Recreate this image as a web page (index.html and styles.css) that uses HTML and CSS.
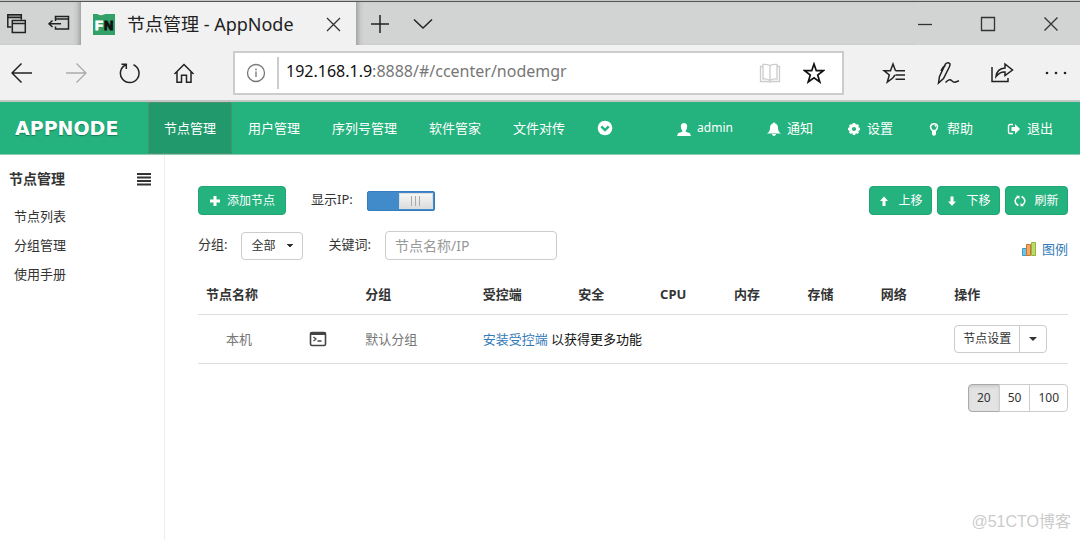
FILE: index.html
```html
<!DOCTYPE html>
<html lang="zh-CN">
<head>
<meta charset="utf-8">
<title>节点管理 - AppNode</title>
<link rel="stylesheet" href="styles.css">
</head>
<body>
<div class="window">
  <div class="tabstrip">
    <div class="tab-tools">
      <button class="icon-btn" aria-label="标签页"><svg width="22" height="22" viewBox="0 0 22 22"><path fill="#999" d="M2 2h13v2H2z"/><g class="ln dark"><path d="M5.500 14H1.800V1.800h13.500v5M2 4.500h13"/><path d="M6.300 7.500h13v12h-13zM6.300 10.500h13"/></g></svg></button>
      <button class="icon-btn" aria-label="搁置标签页"><svg width="22" height="22" viewBox="0 0 22 22"><g class="ln dark"><path d="M7.500 8v-4.500h13v12.500h-13v-2.500M7.500 6h13M13 10.800H1M4.500 7.500L1 10.800 4.500 14"/></g></svg></button>
    </div>
    <div class="tab">
      <svg class="favicon" width="24" height="22" viewBox="0 0 24 22" aria-hidden="true"><path fill="#32a067" d="M1 1h22v21H1z"/><path fill="#f1f1f1" d="M4 0q4 3.500 8 1.500Q15 0 16 0z"/><text class="fav-text" x="3" y="17" fill="#fff" stroke="#fff">F</text><text class="fav-text" x="12" y="17" fill="#111" stroke="#111">N</text></svg>
      <span class="tab-title">节点管理 - AppNode</span>
      <button class="icon-btn" aria-label="关闭标签页"><svg width="16" height="16" viewBox="0 0 16 16"><path class="ln" d="M2 2l13 13M15 2L2 15"/></svg></button>
    </div>
    <div class="tab-actions">
      <button class="icon-btn" aria-label="新建标签页"><svg width="20" height="20" viewBox="0 0 20 20"><path class="ln dark" d="M10 1v18M1 10h18"/></svg></button>
      <button class="icon-btn" aria-label="标签页预览"><svg width="20" height="20" viewBox="0 0 20 20"><path class="ln dark" d="M1 5.500l9 8.500 9-8.500"/></svg></button>
    </div>
    <div class="win-controls">
      <button class="icon-btn" aria-label="最小化"><svg width="16" height="16" viewBox="0 0 16 16"><path class="ln" d="M1 8.500h14"/></svg></button>
      <button class="icon-btn" aria-label="最大化"><svg width="16" height="16" viewBox="0 0 16 16"><path class="ln" d="M1.500 1.500h13v13h-13z"/></svg></button>
      <button class="icon-btn" aria-label="关闭"><svg width="16" height="16" viewBox="0 0 16 16"><path class="ln" d="M1.500 1.500l13 13M14.500 1.500l-13 13"/></svg></button>
    </div>
  </div>

  <div class="toolbar">
    <div class="nav-btns">
      <button class="icon-btn" aria-label="后退"><svg width="22" height="22" viewBox="0 0 22 22"><path class="ln dark" d="M21 11H1M10.500 1.500L1 11l9.500 9.500"/></svg></button>
      <button class="icon-btn" aria-label="前进"><svg width="22" height="22" viewBox="0 0 22 22"><path class="ln faint" d="M1 11h20M11.500 1.500L21 11l-9.500 9.500"/></svg></button>
      <button class="icon-btn" aria-label="刷新页面"><svg width="22" height="22" viewBox="0 0 22 22"><path class="ln dark" d="M14.500 2.800A9.300 9.300 0 1 1 6.500 3M2.500 2.200H7.300V7"/></svg></button>
      <button class="icon-btn" aria-label="主页"><svg width="22" height="22" viewBox="0 0 22 22"><path class="ln dark" d="M1.500 12L11 2.500l9.500 9.500M4 10v10.300h4.500v-7h5v7H18V10"/></svg></button>
    </div>
    <div class="address">
      <button class="icon-btn info" aria-label="网站信息"><svg width="20" height="20" viewBox="0 0 20 20"><circle class="ln gray" cx="10" cy="10" r="8.500"/><path class="ln gray" d="M10 8.500V14M10 5.500v2"/></svg></button>
      <label class="host" for="url">192.168.1.9</label>
      <input id="url" class="url" type="text" value=":8888/#/ccenter/nodemgr">
      <button class="icon-btn" aria-label="阅读视图"><svg width="22" height="22" viewBox="0 0 22 22"><path class="ln pale" d="M11 3.500Q8 2 4 2.500v14.500q4-.5 7 1.500 3-2 7-1.500V2.500Q14 2 11 3.500v15M4 4.500H1.500v15H9.500l1.500.8 1.500-.8h8v-15H18"/></svg></button>
      <button class="icon-btn" aria-label="收藏"><svg width="22" height="22" viewBox="0 0 22 22"><path class="ln bold" d="M11 2l2.300 6.700h7L14.700 13l2.100 7L11 15.900 5.200 20l2.100-7L1.700 8.700h7z"/></svg></button>
    </div>
    <div class="tool-btns">
      <button class="icon-btn" aria-label="中心"><svg width="24" height="22" viewBox="0 0 24 22"><path class="ln dark" d="M13.500 8.700H23M13.500 13H23M13.500 17.300H23M13.500 8.700L11 2 8.500 8.700H2L7.300 13l-2 7 5.500-4 2.200-3"/></svg></button>
      <button class="icon-btn" aria-label="添加笔记"><svg width="24" height="24" viewBox="0 0 24 24"><path class="ln dark" d="M2.500 22l1-6.500L9.500 3Q11.500.8 13.800 2.500q.5 1.500-.5 3.500L7.500 17.500zM9.500 4.500Q7 5.500 5 10M9.500 21.500q4-4 6-2t3.500 1.800l4-1.500"/></svg></button>
      <button class="icon-btn" aria-label="共享"><svg width="24" height="22" viewBox="0 0 24 22"><path class="ln dark" d="M2 5v14.500h16V16M6 14.500Q7 6.500 15 6V2l7.500 6L15 13.500V10Q10 9.500 6 14.500z"/></svg></button>
      <button class="icon-btn" aria-label="更多"><svg width="24" height="22" viewBox="0 0 24 22"><g fill="#222"><circle cx="3" cy="11" r="1.300"/><circle cx="12" cy="11" r="1.300"/><circle cx="21" cy="11" r="1.300"/></g></svg></button>
    </div>
  </div>

  <header class="header">
    <a class="brand" href="#">APPNODE</a>
    <nav class="menu">
      <a class="current" href="#">节点管理</a>
      <a href="#">用户管理</a>
      <a href="#">序列号管理</a>
      <a href="#">软件管家</a>
      <a href="#">文件对传</a>
      <a href="#" aria-label="更多菜单"><svg width="16" height="16" viewBox="0 0 16 16"><circle cx="8" cy="8" r="7.300" fill="#fff"/><path d="M4.300 6.300L8 10l3.700-3.700" fill="none" stroke="#24b27e" stroke-width="2.400"/></svg></a>
    </nav>
    <nav class="account">
      <a class="user" href="#"><svg width="14" height="14" viewBox="0 0 14 14"><path d="M7 1q3.200 0 3.200 3.500 0 2.500-1.500 4v1.200l4.200 1.500L14 14H0l1.100-2.800 4.200-1.500V8.500q-1.500-1.500-1.500-4Q3.800 1 7 1z"/></svg>admin</a>
      <a href="#"><svg width="14" height="14" viewBox="0 0 14 14"><path d="M7 0l1 1.200q3 1 3 4.800 0 3.500 3 5.500H0Q3 9.500 3 6q0-3.800 3-4.800zM5 12h4q-.3 2-2 2t-2-2z"/></svg>通知</a>
      <a href="#"><svg width="14" height="14" viewBox="0 0 14 14"><circle cx="7" cy="7" r="3.600" fill="none" stroke="#fff" stroke-width="3"/><path d="M7 1v2.500M7 10.500V13M1 7h2.500M10.500 7H13M2.800 2.800l1.700 1.700M9.500 9.500l1.700 1.700M2.800 11.200l1.700-1.700M9.500 4.500l1.700-1.700" stroke="#fff" stroke-width="2.600"/></svg>设置</a>
      <a href="#"><svg width="14" height="14" viewBox="0 0 14 14"><path d="M5.300 8.500Q3.500 6.500 3.500 4.800 3.800 2 7 1.800t3.500 3Q10.500 6.500 8.700 8.500z" fill="none" stroke="#fff" stroke-width="1.500"/><path d="M5 9h4v3.500L7 14l-2-1.500zM7 3.300h2v2z"/></svg>帮助</a>
      <a href="#"><svg width="14" height="14" viewBox="0 0 14 14"><path d="M6 2.500H3Q1.500 2.500 1.500 4v6q0 1.500 1.500 1.500h3" fill="none" stroke="#fff" stroke-width="1.400"/><path d="M4.500 5H8V2l5 5-5 5V9H4.500z"/></svg>退出</a>
    </nav>
  </header>

  <div class="page">
    <aside class="sidebar">
      <div class="side-head">
        <h2>节点管理</h2>
        <button class="icon-btn" aria-label="折叠菜单"><svg width="16" height="14" viewBox="0 0 16 14"><path d="M1 1h14v2H1zM1 4.500h14v2H1zM1 8h14v2H1zM1 11.500h14v2H1z" fill="#333"/></svg></button>
      </div>
      <nav class="side-nav">
        <a href="#">节点列表</a>
        <a href="#">分组管理</a>
        <a href="#">使用手册</a>
      </nav>
    </aside>

    <main class="content">
      <div class="row">
        <button class="btn green add"><svg width="12" height="12" viewBox="0 0 12 12"><path d="M6 1v10M1 6h10" stroke="#fff" stroke-width="3"/></svg>添加节点</button>
        <div class="field">
          <label for="show-ip">显示IP:</label>
          <input id="show-ip" class="switch" type="checkbox" checked>
        </div>
        <div class="actions">
          <button class="btn green"><svg width="12" height="12" viewBox="0 0 12 12"><path d="M6 1.500l4 4.500H7.500v5h-3V6H2z"/></svg>上移</button>
          <button class="btn green"><svg width="12" height="12" viewBox="0 0 12 12"><path d="M6 11L2 6.500h2.500v-5h3v5H10z"/></svg>下移</button>
          <button class="btn green"><svg width="12" height="12" viewBox="0 0 12 12"><path d="M4.500 10.500Q1 9 1.200 5.500 1.500 3 4 2M7.500 1.500Q11 3 10.800 6.500 10.500 9 8 10" fill="none" stroke="#fff" stroke-width="1.500"/><path d="M2 .8h3.500v3.500zM10 11.200H6.500V7.700z"/></svg>刷新</button>
        </div>
      </div>

      <div class="row filters">
        <div class="field">
          <label for="group">分组:</label>
          <select id="group" class="select"><option>全部</option></select>
        </div>
        <div class="field keyword">
          <label for="keyword">关键词:</label>
          <input id="keyword" class="text-input" type="text" placeholder="节点名称/IP">
        </div>
        <a class="legend" href="#"><svg width="16" height="16" viewBox="0 0 16 16"><path d="M1.500 7.500h4v7h-4z" fill="#6fc5e4" stroke="#3d9dc2"/><path d="M5.500 3.500h4v11h-4z" fill="#f2a868" stroke="#c9742f"/><path d="M10.500 1.500h4v13h-4z" fill="#bddb69" stroke="#8fb53a"/></svg>图例</a>
      </div>

      <table class="nodes">
        <thead>
          <tr><th class="c-name">节点名称</th><th class="c-group">分组</th><th class="c-agent">受控端</th><th class="c-safe">安全</th><th class="c-cpu">CPU</th><th>内存</th><th>存储</th><th>网络</th><th class="c-ops">操作</th></tr>
        </thead>
        <tbody>
          <tr>
            <td><div class="node-name"><span>本机</span><button class="icon-btn" aria-label="终端"><svg width="18" height="16" viewBox="0 0 18 16"><rect x="1.500" y="1.500" width="15" height="13" rx="1.500" fill="#fff" stroke="#444" stroke-width="1.600"/><path d="M1.500 2.500h15" stroke="#444" stroke-width="3"/><path d="M4.500 6l2.500 2-2.500 2M8.500 10h4" fill="none" stroke="#444" stroke-width="1.300"/></svg></button></div></td>
            <td class="muted">默认分组</td>
            <td class="notice" colspan="6"><a href="#">安装受控端</a> 以获得更多功能</td>
            <td><div class="group"><button class="btn plain">节点设置</button><button class="btn plain caret" aria-label="更多操作"><svg width="8" height="6" viewBox="0 0 8 6"><path d="M0 1h8L4 5z" fill="#333"/></svg></button></div></td>
          </tr>
        </tbody>
      </table>

      <div class="group pager">
        <button class="btn plain active">20</button><button class="btn plain">50</button><button class="btn plain">100</button>
      </div>
    </main>
    <div class="watermark">@51CTO博客</div>
  </div>
</div>
</body>
</html>
```

FILE: styles.css
```css
* { box-sizing: border-box; }
body {
  margin: 0;
  font: 13px/20px "Noto Sans", "Noto Sans CJK SC", sans-serif;
  color: #333;
  background: #fff;
}
a { color: inherit; text-decoration: none; }
button, input, select { font: inherit; color: inherit; }
svg { display: block; flex: none; }
.window { display: flex; flex-direction: column; min-height: 100vh; border-top: 1px solid #c3c8c3; }
.icon-btn { display: flex; padding: 0; border: 0; background: none; }
.ln { fill: none; stroke: #333; stroke-width: 1.3; }
.dark { stroke: #222; stroke-width: 1.5; }
.bold { stroke: #111; stroke-width: 1.7; }
.faint { stroke: #aaa; }
.gray { stroke: #777; }
.pale { stroke: #ccc; }

.tabstrip {
  display: flex;
  height: 44px;
  border-top: 1px solid #555;
  background: #d2d3d3;
}
.tab-tools { display: flex; align-items: center; gap: 20px; width: 81px; padding-left: 6px; box-shadow: inset -6px 0 6px -5px #888; }
.tab {
  display: flex;
  align-items: center;
  width: 275px;
  padding: 0 15px 0 11px;
  background: #f1f1f1;
}
.fav-text { font: bold 13px "Liberation Sans", sans-serif; }
.tab-title { flex: 1; padding-left: 11px; font-size: 18px; color: #222; }
.tab-actions { display: flex; align-items: center; gap: 23px; padding-left: 14px; flex: 1; box-shadow: inset 6px 0 6px -5px #888; }
.win-controls { display: flex; align-items: center; gap: 47px; padding-right: 21px; }

.toolbar {
  display: flex;
  align-items: center;
  height: 57px;
  border-bottom: 2px solid #c2c6c4;
  background: #f1f1f1;
}
.nav-btns { display: flex; gap: 32px; width: 233px; padding-left: 11px; }
.address {
  display: flex;
  align-items: center;
  flex: 1;
  height: 44px;
  padding: 0 17px 0 11px;
  border: 2px solid #ccc;
  background: #fff;
  font-size: 16px;
}
.info { height: 32px; align-items: center; padding-right: 11px; border-right: 2px solid #ccc; }
.host { padding: 0 0 3px 7px; color: #111; }
.url { flex: 1; min-width: 0; padding: 0 0 3px; border: 0; color: #777; background: none; outline: 0; }
.address .icon-btn + .icon-btn { margin-left: 22px; }
.tool-btns { display: flex; align-items: center; gap: 30px; padding: 0 12px 0 38px; }

.header {
  display: flex;
  align-items: stretch;
  height: 53px;
  border-bottom: 1px solid #8fcdb3;
  background: #24b27e;
  color: #fff;
}
.brand { display: flex; align-items: center; width: 148px; padding-left: 15px; font: bold 19px "DejaVu Sans", sans-serif; text-shadow: 0 1px 1px #177a55; }
.menu, .account { display: flex; }
.menu a { display: flex; align-items: center; padding: 0 16px; }
.menu .current { padding: 0 15px; background: #21996d; border: 1px dotted #6f8b70; }
.account { margin-left: auto; gap: 34px; padding-right: 27px; }
.account a { display: flex; align-items: center; gap: 6px; }
.account .user { font-size: 12px; }
.account svg { fill: #fff; margin-top: 2px; }

.page { position: relative; display: flex; flex: 1; }
.sidebar { width: 165px; border-right: 1px solid #eee; padding: 14px 12px 0 9px; }
.side-head { display: flex; align-items: center; justify-content: space-between; }
.side-head h2 { margin: 0; font-size: 14px; line-height: 20px; }
.side-nav { display: flex; flex-direction: column; gap: 9px; padding: 17px 5px; }

.content { flex: 1; padding: 31px 12px 20px 33px; }
.row { display: flex; align-items: center; }
.field { display: flex; align-items: center; gap: 14px; }
.field label { padding-bottom: 3px; }
.btn { display: flex; align-items: center; justify-content: center; height: 29px; padding: 0 8px; border: 1px solid #ccc; border-radius: 4px; background: #fff; font-size: 12px; }
.green { gap: 8px; border-color: #20a573; background: #24b27e; color: #fff; fill: #fff; }
.add { width: 88px; margin-right: 25px; gap: 6px; }
.switch {
  appearance: none;
  display: flex;
  justify-content: flex-end;
  width: 68px;
  height: 20px;
  margin: 0;
  padding: 1px;
  border: 1px solid #357ebd;
  border-radius: 2px;
  background: #428bca;
}
.switch::before {
  content: "";
  width: 32px;
  border: 1px solid #ddd;
  background:
    repeating-linear-gradient(90deg, #aaa 0 1px, transparent 1px 4px) center / 9px 10px no-repeat,
    linear-gradient(#f6f6f6, #ddd);
}
.actions { display: flex; gap: 5px; margin-left: auto; }
.actions .btn { width: 63px; }
.filters { margin-top: 16px; }
.select {
  appearance: none;
  width: 62px;
  height: 28px;
  padding: 0 9px;
  border: 1px solid #ccc;
  border-radius: 4px;
  font-size: 12px;
  background:
    linear-gradient(45deg, transparent 50%, #333 50%) right 12px center / 4px 4px no-repeat,
    linear-gradient(-45deg, transparent 50%, #333 50%) right 8px center / 4px 4px no-repeat,
    #fff;
}
.keyword { margin-left: 25px; }
.text-input { width: 172px; height: 29px; padding: 0 9px; border: 1px solid #ccc; border-radius: 4px; font-size: 14px; }
.text-input::placeholder { color: #999; }
.legend { display: flex; align-items: center; gap: 5px; margin: 6px 0 0 auto; color: #337ab7; }

.nodes { width: 100%; margin-top: 14px; border-collapse: collapse; table-layout: fixed; }
.nodes th, .nodes td { padding: 10px 8px; border-bottom: 1px solid #ddd; text-align: left; }
.nodes .c-name { width: 18.3%; }
.nodes .c-group { width: 13.5%; }
.nodes .c-agent { width: 11%; }
.nodes .c-safe { width: 9.4%; }
.nodes .c-cpu { width: 8.5%; }
.nodes .c-ops { width: 14%; }
.node-name { display: flex; align-items: center; justify-content: space-between; padding: 0 22px 0 20px; color: #777; }
.muted { color: #777; }
.notice { color: #111; }
.notice a { color: #337ab7; }
.group { display: flex; }
.plain { height: 28px; }
.plain:not(:first-child) { margin-left: -1px; border-top-left-radius: 0; border-bottom-left-radius: 0; }
.plain:not(:last-child) { border-top-right-radius: 0; border-bottom-right-radius: 0; }
.caret { width: 28px; }
.pager { justify-content: flex-end; margin-top: 20px; }
.active { background: #e3e3e3; border-color: #aaa; box-shadow: inset 0 2px 3px #ccc; }
.watermark { position: absolute; right: 9px; bottom: 8px; font: 16px/20px "Liberation Sans", "Noto Sans CJK SC", sans-serif; color: #ccc; }
```
